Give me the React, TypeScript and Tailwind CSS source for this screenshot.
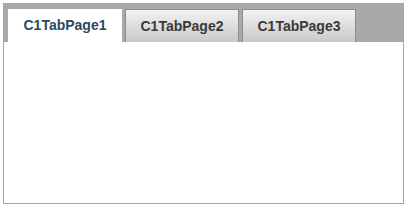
export default function App() {
  const tabs = ["C1TabPage1", "C1TabPage2", "C1TabPage3"];
  return (
    <div className="w-[407px] h-[207px] bg-white pt-[3px] pl-[3px]" style={{ fontFamily: '"Liberation Sans", Arial, sans-serif' }}>
      <div className="w-[401px] h-[201px] border border-[#a6a6a6] bg-white flex flex-col">
        <div className="h-[38px] bg-[#a9a9a9] flex items-end gap-[3px] pl-[4px]">
          {tabs.map((t, i) =>
            i === 0 ? (
              <div
                key={t}
                className="w-[114px] h-[33px] bg-white flex items-center justify-center text-[14px] font-bold text-[#2b4a5f]"
              >
                {t}
              </div>
            ) : (
              <div
                key={t}
                className="w-[114px] h-[33px] border border-b-0 border-[#8c8c8c] bg-gradient-to-b from-[#f2f2f2] to-[#c9c9c9] flex items-center justify-center text-[14px] font-bold text-[#3a3a3a]"
              >
                {t}
              </div>
            )
          )}
        </div>
        <div className="flex-1 bg-white" />
      </div>
    </div>
  );
}
